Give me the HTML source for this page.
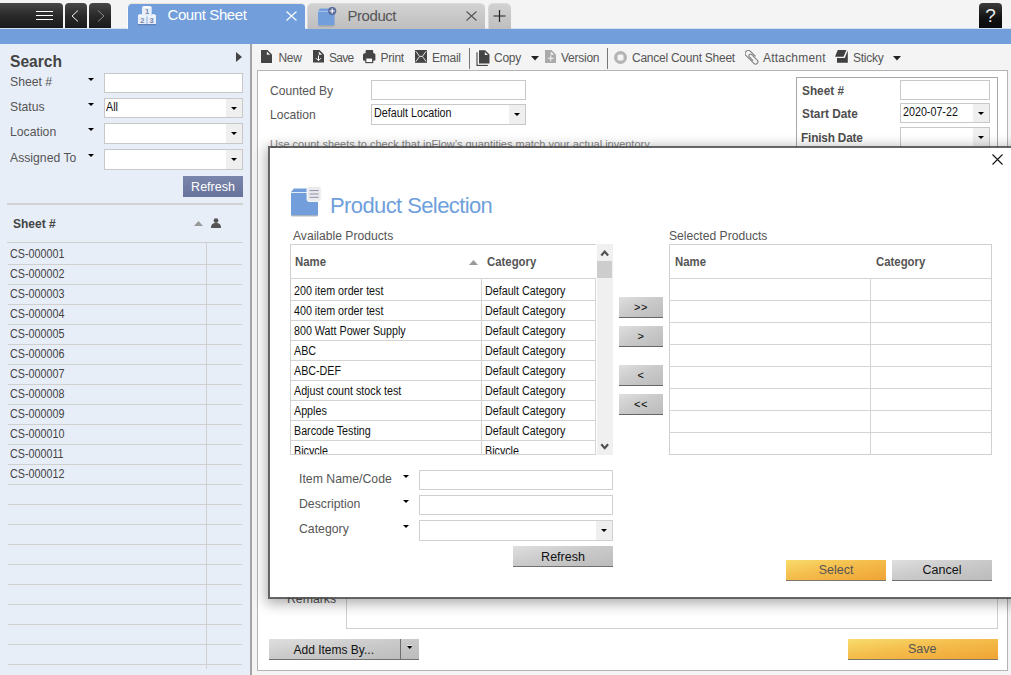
<!DOCTYPE html>
<html>
<head>
<meta charset="utf-8">
<title>Count Sheet</title>
<style>
*{box-sizing:border-box;margin:0;padding:0}
html,body{width:1011px;height:675px;overflow:hidden;background:#f4f4f4;font-family:"Liberation Sans",sans-serif;font-size:12px;color:#444}
.abs{position:absolute}
#topbar{position:absolute;left:0;top:0;width:1011px;height:28px;background:#f4f4f4}
#bluebar{position:absolute;left:0;top:28px;width:1011px;height:16px;background:#729fdb;border-top:1px solid #d3deee}
.dk{position:absolute;top:3px;height:25px;background:linear-gradient(#484848,#2a2a2a 50%,#1a1a1a);border-radius:4px 4px 0 0}
.tab{position:absolute;top:3px;height:25px;border-radius:5px 5px 0 0;font-size:15px;line-height:25px}
#tab1{left:127px;width:177.5px;background:#729fdb;color:#fff;height:26px;border-top:1px solid #ebe6dc;border-left:1px solid #fbfbfb;border-radius:5px 4px 0 0}
#tab2{left:307px;width:178px;height:25.5px;background:linear-gradient(#d2d2d2,#bebebe);color:#555;border-top:1px solid #dcdcdc;border-left:1px solid #d8d8d8}
#tab3{left:488px;width:23px;height:25.5px;background:linear-gradient(#d2d2d2,#bebebe);border-top:1px solid #dcdcdc;border-left:1px solid #d8d8d8}
#left{position:absolute;left:0;top:44px;width:250px;height:631px;background:#e8eef8}
#split{position:absolute;left:250px;top:44px;width:2px;height:631px;background:#a4a4a4}
#main{position:absolute;left:252px;top:44px;width:759px;height:631px;background:#f4f4f4}
.lbl{position:absolute;font-size:12.6px;color:#555;white-space:nowrap;transform:scaleX(.97);transform-origin:0 50%}
.inp{position:absolute;background:#fff;border:1px solid #c8c8c8}
.dd{position:absolute;right:0;top:0;bottom:0;width:16px;background:#efefef}
.dd:after,.car:after{content:"";position:absolute;left:50%;top:50%;margin-left:-3px;margin-top:-1px;border:3px solid transparent;border-top:3px solid #000;border-bottom:none}
.car{position:absolute;width:8px;height:8px}
.dd:after{margin-left:-3px;margin-top:-1.5px}
.val{position:absolute;left:2px;top:2px;font-size:12px;color:#111;letter-spacing:-0.5px;white-space:nowrap}
.row{position:absolute;left:8px;width:234px;height:1px;background:#d0d0d0}
.btn{position:absolute;text-align:center;font-size:12px;color:#111;background:linear-gradient(to bottom right,#dfdfdf,#cbcbcb 45%,#bbbbbb);border-bottom:1px solid #707070;white-space:nowrap}
.tb{position:absolute;top:6px;font-size:12px;letter-spacing:-0.25px;color:#555;white-space:nowrap;line-height:16px}

.nar{display:inline-block;transform:scaleX(.86);transform-origin:0 50%;white-space:nowrap}
.f{position:absolute;font-size:12.6px;color:#555;white-space:nowrap;transform:scaleX(.975);transform-origin:0 50%}
.fb{position:absolute;font-size:11.8px;font-weight:bold;color:#4e4e4e;white-space:nowrap}
.gv{position:absolute;font-size:12.5px;color:#111;white-space:nowrap;transform:scaleX(.858);transform-origin:0 50%}
.gh{font-size:13px;color:#555;transform:scaleX(.875);transform-origin:0 50%}
.gh2{font-size:13.5px;transform:scaleX(.875);transform-origin:0 50%}
.hl{position:absolute;height:1px;background:#d4d4d4}
.vl{position:absolute;width:1px;background:#d4d4d4}
#dlg{position:absolute;left:268px;top:146px;width:760px;height:453px;background:#fff;background-clip:padding-box;border:2px solid rgba(72,72,72,.82);box-shadow:0 3px 12px 2px rgba(0,0,0,.31)}
.yb{position:absolute;text-align:center;font-size:12.5px;color:#555;background:linear-gradient(to bottom right,#f8dc6c,#f4bd4c 45%,#efa434);border-bottom:1px solid #7d766a;white-space:nowrap}
</style>
</head>
<body>
<div id="topbar"></div>
<div id="bluebar"></div>
<div class="dk" style="left:-4px;width:67px"><svg class="abs" style="left:40px;top:8px" width="17" height="10"><path d="M0 0.5H17M0 4.5H17M0 8.5H17" stroke="#fff" stroke-width="1.15"/></svg></div>
<div class="dk" style="left:65px;width:22px"><svg class="abs" style="left:6px;top:7px" width="8" height="12"><path d="M7 0.5L1 6L7 11.5" stroke="#f0f0f0" stroke-width="1" fill="none"/></svg></div>
<div class="dk" style="left:89px;width:22px"><svg class="abs" style="left:8px;top:7px" width="8" height="12"><path d="M1 0.5L7 6L1 11.5" stroke="#8a8a8a" stroke-width="1" fill="none"/></svg></div>
<div class="tab" id="tab1">
<svg class="abs" style="left:9px;top:0px" width="20" height="22" viewBox="0 0 20 22"><path d="M5 3.4L6.4 1.9H13.4L14.7 3.4V11H5Z" fill="#e9eff9"/><path d="M5.6 3.2H14.2" stroke="#fff" stroke-width="1.2"/><path d="M1 11.6L2.2 10.2H5V11.6Z M15 11.6V10.2H17.8L19 11.6Z" fill="#f4f7fc"/><rect x="1" y="11.4" width="8.6" height="9" fill="#e9eff9"/><rect x="10.4" y="11.4" width="8.6" height="9" fill="#e9eff9"/><path d="M1 11.8H19" stroke="#fff" stroke-width="0.9"/><path d="M1 20.7H19" stroke="#4a6ca8" stroke-width="0.9"/><text x="10" y="10.3" font-size="7.5" font-weight="bold" fill="#7486ad" text-anchor="middle" font-family="Liberation Sans, sans-serif">1</text><text x="5.3" y="19.3" font-size="7.5" font-weight="bold" fill="#7486ad" text-anchor="middle" font-family="Liberation Sans, sans-serif">2</text><text x="14.7" y="19.3" font-size="7.5" font-weight="bold" fill="#7486ad" text-anchor="middle" font-family="Liberation Sans, sans-serif">3</text></svg>
<span class="abs" style="left:39.5px;top:-2px;letter-spacing:-0.4px">Count Sheet</span>
<svg class="abs" style="left:158px;top:7px" width="11" height="10"><path d="M0.5 0.5L10.5 9.5M10.5 0.5L0.5 9.5" stroke="#fff" stroke-width="1.1"/></svg></div>
<div class="tab" id="tab2">
<svg class="abs" style="left:9px;top:2.8px" width="20" height="20" viewBox="0 0 20 20"><path d="M1 4.2L3 1.6H15L17.6 4.2V17.5Q17.6 18.5 16.6 18.5H2Q1 18.5 1 17.5Z" fill="#729fdb"/><path d="M1.5 19H17.2" stroke="#9a9a9a" stroke-width="0.8"/><path d="M1 4.5H17" stroke="#b5cdf0" stroke-width="0.8"/><circle cx="15.2" cy="4" r="4.2" fill="#5b6c9c"/><path d="M15.2 1.4V6.6M12.6 4H17.8" stroke="#fff" stroke-width="1.2"/></svg>
<span class="abs" style="left:39.5px;top:-1.5px;letter-spacing:-0.45px">Product</span>
<svg class="abs" style="left:158px;top:7px" width="11" height="10"><path d="M0.5 0.5L10.5 9.5M10.5 0.5L0.5 9.5" stroke="#555" stroke-width="1.1"/></svg></div>
<div class="tab" id="tab3"><svg class="abs" style="left:3.5px;top:5.5px" width="13" height="12"><path d="M6.5 0V12M0.5 6H12.5" stroke="#222" stroke-width="1.2"/></svg></div>
<div class="dk" style="left:979px;width:23px;background:linear-gradient(#3c3c3c,#111 60%,#0c0c0c);color:#ececec;font-size:19px;line-height:25px;text-align:center;top:3px;height:25px">?</div>

<div id="left">
<div class="abs" style="left:10px;top:8.5px;font-size:15.6px;font-weight:bold;color:#444;letter-spacing:0">Search</div>
<svg class="abs" style="left:236px;top:8px" width="6" height="10"><path d="M0 0 L6 5 L0 10Z" fill="#444"/></svg>
<div class="lbl" style="left:10px;top:30.5px">Sheet #</div>
<div class="car" style="left:86.5px;top:31px"></div>
<div class="inp" style="left:104px;top:29px;width:139px;height:20px"></div>
<div class="lbl" style="left:10px;top:55.5px">Status</div>
<div class="car" style="left:86.5px;top:56px"></div>
<div class="inp" style="left:104px;top:54px;width:139px;height:20px"><span class="gv" style="left:1px;top:1px">All</span><div class="dd"></div></div>
<div class="lbl" style="left:10px;top:80.5px">Location</div>
<div class="car" style="left:86.5px;top:81px"></div>
<div class="inp" style="left:104px;top:79px;width:139px;height:21px"><div class="dd"></div></div>
<div class="lbl" style="left:10px;top:106.5px">Assigned To</div>
<div class="car" style="left:86.5px;top:107px"></div>
<div class="inp" style="left:104px;top:105px;width:139px;height:21px"><div class="dd"></div></div>
<div class="abs" style="left:183px;top:132px;width:60px;height:21px;background:linear-gradient(#7a86ab,#67739b);color:#fff;font-size:12.5px;line-height:23px;text-align:center">Refresh</div>
<div class="abs" style="left:7px;top:159px;width:236px;height:2px;background:#d2d2d2"></div>
<div class="abs" style="left:13px;top:173px;font-size:12px;font-weight:bold;color:#444">Sheet #</div>
<svg class="abs" style="left:194px;top:177px" width="9" height="5"><path d="M0 5 L4.5 0 L9 5Z" fill="#999"/></svg>
<svg class="abs" style="left:211px;top:174px" width="10" height="10"><circle cx="5" cy="2.6" r="2.4" fill="#535353"/><path d="M0 10 C0 6 2 5 5 5 C8 5 10 6 10 10Z" fill="#535353"/></svg>
<div class="row" style="top:198px;left:7px;width:236px"></div>
<div class="row" style="top:220px"></div>
<div class="lbl nar" style="left:10px;top:202.5px;color:#444;font-size:12.5px">CS-000001</div>
<div class="row" style="top:240px"></div>
<div class="lbl nar" style="left:10px;top:222.5px;color:#444;font-size:12.5px">CS-000002</div>
<div class="row" style="top:260px"></div>
<div class="lbl nar" style="left:10px;top:242.5px;color:#444;font-size:12.5px">CS-000003</div>
<div class="row" style="top:280px"></div>
<div class="lbl nar" style="left:10px;top:262.5px;color:#444;font-size:12.5px">CS-000004</div>
<div class="row" style="top:300px"></div>
<div class="lbl nar" style="left:10px;top:282.5px;color:#444;font-size:12.5px">CS-000005</div>
<div class="row" style="top:320px"></div>
<div class="lbl nar" style="left:10px;top:302.5px;color:#444;font-size:12.5px">CS-000006</div>
<div class="row" style="top:340px"></div>
<div class="lbl nar" style="left:10px;top:322.5px;color:#444;font-size:12.5px">CS-000007</div>
<div class="row" style="top:360px"></div>
<div class="lbl nar" style="left:10px;top:342.5px;color:#444;font-size:12.5px">CS-000008</div>
<div class="row" style="top:380px"></div>
<div class="lbl nar" style="left:10px;top:362.5px;color:#444;font-size:12.5px">CS-000009</div>
<div class="row" style="top:400px"></div>
<div class="lbl nar" style="left:10px;top:382.5px;color:#444;font-size:12.5px">CS-000010</div>
<div class="row" style="top:420px"></div>
<div class="lbl nar" style="left:10px;top:402.5px;color:#444;font-size:12.5px">CS-000011</div>
<div class="row" style="top:440px"></div>
<div class="lbl nar" style="left:10px;top:422.5px;color:#444;font-size:12.5px">CS-000012</div>
<div class="row" style="top:460px"></div>
<div class="row" style="top:480px"></div>
<div class="row" style="top:500px"></div>
<div class="row" style="top:520px"></div>
<div class="row" style="top:540px"></div>
<div class="row" style="top:560px"></div>
<div class="row" style="top:580px"></div>
<div class="row" style="top:600px"></div>
<div class="row" style="top:620px"></div>
<div class="abs" style="left:206px;top:198px;width:1px;height:427px;background:#d0d0d0"></div>
</div>
<div id="split"></div>
<div id="main">
<svg class="abs" style="left:9px;top:6px" width="11" height="13"><path d="M0 0H6.5L11 4.5V13H0Z" fill="#444"/><path d="M5.8 1.6V4.8H9.2Z" fill="#f4f4f4"/></svg>
<div class="tb" style="left:26.4px">New</div>
<svg class="abs" style="left:61px;top:6.3px" width="11" height="13" viewBox="0 0 11 13"><path d="M0 0H6.5L11 4.5V12.5H0Z" fill="#444"/><path d="M5.8 1.6V4.8H9.2Z" fill="#f4f4f4"/><path d="M5.5 5.5V10.6M3 8.2L5.5 10.7L8 8.2" stroke="#fff" stroke-width="1" fill="none"/></svg>
<div class="tb" style="left:77px;letter-spacing:-0.7px">Save</div>
<svg class="abs" style="left:111px;top:5.8px" width="13" height="14" viewBox="0 0 13 14"><path d="M2.6 4V1Q2.6 0 3.6 0H9.2Q10.2 0 10.2 1V4Z" fill="#444"/><rect x="0" y="3.2" width="12.4" height="7.6" rx="1.5" fill="#444"/><rect x="2.8" y="8" width="6.9" height="4.6" fill="#fafafa" stroke="#444" stroke-width="1.1"/></svg>
<div class="tb" style="left:128.5px">Print</div>
<svg class="abs" style="left:163px;top:6.2px" width="12" height="13" viewBox="0 0 12 13"><rect x="0" y="0" width="12" height="12.8" fill="#444"/><path d="M0.8 1.2L4.6 6.4L0.8 11.6M11.2 1.2L7.4 6.4L11.2 11.6M4.6 6.4H7.4" stroke="#f4f4f4" stroke-width="0.9" fill="none"/></svg>
<div class="tb" style="left:180px">Email</div>
<div class="abs" style="left:217px;top:4px;width:1px;height:21px;background:#777"></div>
<svg class="abs" style="left:223.5px;top:5.5px" width="15" height="17" viewBox="0 0 15 17"><path d="M1 2.2V15.4H11.8" stroke="#444" stroke-width="1.1" fill="none"/><path d="M2 0H9.5L14.2 4.4V14.5H2Z" fill="#f4f4f4"/><path d="M3 0.3H9.2L13.5 4.6V13.6H3Z" fill="#444"/><path d="M8.8 1.9V5H12Z" fill="#f4f4f4"/></svg>
<div class="tb" style="left:242px">Copy</div>
<svg class="abs" style="left:278.5px;top:12px" width="8" height="5"><path d="M0 0H8L4 4.5Z" fill="#222"/></svg>
<svg class="abs" style="left:292.8px;top:6px" width="11" height="13"><path d="M0 0H6.5L11 4.5V13H0Z" fill="#aaa"/><path d="M5.8 1.6V4.8H9.2Z" fill="#f4f4f4"/><path d="M5.8 5.4V11.2M2.9 8.3H8.7" stroke="#f4f4f4" stroke-width="1" fill="none"/></svg>
<div class="tb" style="left:309px">Version</div>
<div class="abs" style="left:355px;top:4px;width:1px;height:21px;background:#777"></div>
<svg class="abs" style="left:362px;top:6.5px" width="13" height="13"><circle cx="6.5" cy="6.5" r="6.5" fill="#b4b4b4"/><rect x="3.5" y="3.5" width="6" height="6" rx="1.5" fill="#f4f4f4"/></svg>
<div class="tb" style="left:380px">Cancel Count Sheet</div>
<svg class="abs" style="left:493px;top:6px" width="15" height="15" viewBox="0 0 15 15"><g transform="translate(3.3,3.5) rotate(-45)"><path d="M3.1 7.2V0A3.1 3.1 0 0 0 -3.1 0V11A2.35 2.35 0 0 0 1.6 11V3.2A1.6 1.6 0 0 0 -1.6 3.2V8.4" stroke="#7a7a7a" stroke-width="1" fill="none"/></g></svg>
<div class="tb" style="left:511px;letter-spacing:0.2px">Attachment</div>
<svg class="abs" style="left:583px;top:6.3px" width="14" height="14" viewBox="0 0 14 14"><path d="M2.8 0.1H11.4L8.6 6.7H0Z" fill="#3f3f3f"/><path d="M12.8 0.6V12.8H2V8.1H9.8Z" fill="#3f3f3f"/></svg>
<div class="tb" style="left:601px">Sticky</div>
<svg class="abs" style="left:641px;top:12px" width="8" height="5"><path d="M0 0H8L4 4.5Z" fill="#222"/></svg>
<div class="abs" id="form" style="left:5px;top:26px;width:751px;height:601px;background:#fff;border:1px solid #b4b4b4"></div>
</div>
<div class="f" style="left:270px;top:84px;font-size:12.4px">Counted By</div>
<div class="inp" style="left:371px;top:80px;width:155px;height:20px"></div>
<div class="f" style="left:270px;top:108px;font-size:12.4px">Location</div>
<div class="inp" style="left:371px;top:104px;width:155px;height:21px"><span class="gv" style="left:2px;top:1px">Default Location</span><div class="dd"></div></div>
<div class="f" style="left:270px;top:138px;font-size:11.25px;color:#858585">Use count sheets to check that inFlow’s quantities match your actual inventory.</div>
<div class="abs" style="left:796px;top:77px;width:202px;height:90px;border:1px solid #a8a8a8"></div>
<div class="fb gh2" style="left:802px;top:82.5px">Sheet #</div>
<div class="inp" style="left:900px;top:80px;width:90px;height:20px"></div>
<div class="fb gh2" style="left:802px;top:105.5px">Start Date</div>
<div class="inp" style="left:900px;top:103px;width:90px;height:20px"><span class="gv" style="left:2px;top:1px">2020-07-22</span><div class="dd"></div></div>
<div class="fb gh2" style="left:801px;top:129.5px;letter-spacing:-0.2px">Finish Date</div>
<div class="inp" style="left:900px;top:127px;width:90px;height:21px"><div class="dd"></div></div>
<div class="f" style="left:287px;top:592px">Remarks</div>
<div class="inp" style="left:346px;top:560px;width:652px;height:69px;border-color:#d0d0d0"></div>
<div class="btn" style="left:269px;top:639px;width:150px;height:21px;line-height:21px;font-size:12px;line-height:23px;text-align:left;padding-left:24.5px">Add Items By...</div><div class="abs" style="left:400px;top:639px;width:1px;height:20px;background:#6e6e6e"></div><svg class="abs" style="left:407px;top:644.6px" width="6" height="5"><path d="M0 0.2H5.4" stroke="#fff" stroke-width="0.8"/><path d="M0 0.9H5.4L2.7 4Z" fill="#000"/></svg>
<div class="yb" style="left:848px;top:639px;width:150px;height:21px;line-height:21px;padding-right:1.5px">Save</div>
<div id="dlg">
<svg class="abs" style="left:721.5px;top:6px" width="11" height="11"><path d="M0.5 0.5L10.5 10.5M10.5 0.5L0.5 10.5" stroke="#111" stroke-width="1.1"/></svg>
<svg class="abs" style="left:20px;top:37px" width="32" height="32" viewBox="0 0 32 32"><path d="M1 7L4 3.5H24L28 7V30.4H1Z" fill="#729fdb"/><path d="M1.5 30.9H27.5" stroke="#9a948c" stroke-width="0.8"/><path d="M1 7.5H28" stroke="#fff" stroke-width="0.8"/><rect x="17" y="1.3" width="14.2" height="15.2" rx="2" fill="#ebebee" stroke="#fff" stroke-width="0.8"/><path d="M19.6 5.6H28.6M19.6 9H28.6M19.6 12.3H28.6" stroke="#8a8fa8" stroke-width="1"/></svg>
<div class="abs" style="left:60px;top:43.5px;font-size:22px;color:#6f9fdc;letter-spacing:-0.6px;white-space:nowrap;line-height:28px">Product Selection</div>
<div class="f" style="left:22.5px;top:80.5px;font-size:12.45px;color:#555">Available Products</div>
<div class="f" style="left:399px;top:80.5px;font-size:12.45px;color:#555">Selected Products</div>
<div class="abs" style="left:20px;top:96px;width:306px;height:211px;border:1px solid #d0d0d0;border-right:none;overflow:hidden" id="g1">
<div class="fb gh" style="left:4px;top:9px">Name</div>
<div class="fb gh" style="left:196px;top:9px">Category</div>
<svg class="abs" style="left:178px;top:15px" width="9" height="5"><path d="M0 5L4.5 0L9 5Z" fill="#999"/></svg>
<div class="hl" style="left:0;top:33px;width:306px"></div>
<div class="gv" style="left:3px;top:39px">200 item order test</div>
<div class="gv" style="left:194px;top:39px">Default Category</div>
<div class="hl" style="left:0;top:55px;width:306px"></div>
<div class="gv" style="left:3px;top:59px">400 item order test</div>
<div class="gv" style="left:194px;top:59px">Default Category</div>
<div class="hl" style="left:0;top:75px;width:306px"></div>
<div class="gv" style="left:3px;top:79px">800 Watt Power Supply</div>
<div class="gv" style="left:194px;top:79px">Default Category</div>
<div class="hl" style="left:0;top:95px;width:306px"></div>
<div class="gv" style="left:3px;top:99px">ABC</div>
<div class="gv" style="left:194px;top:99px">Default Category</div>
<div class="hl" style="left:0;top:115px;width:306px"></div>
<div class="gv" style="left:3px;top:119px">ABC-DEF</div>
<div class="gv" style="left:194px;top:119px">Default Category</div>
<div class="hl" style="left:0;top:135px;width:306px"></div>
<div class="gv" style="left:3px;top:139px">Adjust count stock test</div>
<div class="gv" style="left:194px;top:139px">Default Category</div>
<div class="hl" style="left:0;top:155px;width:306px"></div>
<div class="gv" style="left:3px;top:159px">Apples</div>
<div class="gv" style="left:194px;top:159px">Default Category</div>
<div class="hl" style="left:0;top:175px;width:306px"></div>
<div class="gv" style="left:3px;top:179px">Barcode Testing</div>
<div class="gv" style="left:194px;top:179px">Default Category</div>
<div class="hl" style="left:0;top:195px;width:306px"></div>
<div class="gv" style="left:3px;top:199px">Bicycle</div>
<div class="gv" style="left:194px;top:199px">Bicycle</div>
<div class="hl" style="left:0;top:215px;width:306px"></div>
<div class="vl" style="left:190px;top:34px;height:180px"></div>
<div class="vl" style="left:304px;top:34px;height:180px"></div>
</div>
<div class="abs" style="left:327px;top:96px;width:16px;height:211px;background:#f0f0f0"><div class="abs" style="left:0;top:17px;width:15px;height:17px;background:#cdcdcd"></div><svg class="abs" style="left:3px;top:5px" width="10" height="8"><path d="M1.3 6.5L4.7 2.6L8.1 6.5" stroke="#505050" stroke-width="2.2" fill="none"/></svg><svg class="abs" style="left:3px;top:199px" width="10" height="8"><path d="M1.3 1.2L4.7 5.1L8.1 1.2" stroke="#505050" stroke-width="2.2" fill="none"/></svg></div>
<div class="btn" style="left:349px;top:149px;width:44px;height:21px;line-height:20px;font-size:11px;letter-spacing:0.7px;color:#000;border-bottom-color:#666">&gt;&gt;</div>
<div class="btn" style="left:349px;top:178px;width:44px;height:21px;line-height:20px;font-size:11px;letter-spacing:0.7px;color:#000;border-bottom-color:#666">&gt;</div>
<div class="btn" style="left:349px;top:217px;width:44px;height:21px;line-height:20px;font-size:11px;letter-spacing:0.7px;color:#000;border-bottom-color:#666">&lt;</div>
<div class="btn" style="left:349px;top:246px;width:44px;height:21px;line-height:20px;font-size:11px;letter-spacing:0.7px;color:#000;border-bottom-color:#666">&lt;&lt;</div>
<div class="abs" style="left:399px;top:96px;width:323px;height:211px;border:1px solid #d0d0d0" id="g2">
<div class="fb gh" style="left:5px;top:9px">Name</div>
<div class="fb gh" style="left:206px;top:9px">Category</div>
<div class="hl" style="left:0;top:33px;width:321px"></div>
<div class="hl" style="left:0;top:55px;width:321px"></div>
<div class="hl" style="left:0;top:77px;width:321px"></div>
<div class="hl" style="left:0;top:99px;width:321px"></div>
<div class="hl" style="left:0;top:121px;width:321px"></div>
<div class="hl" style="left:0;top:143px;width:321px"></div>
<div class="hl" style="left:0;top:165px;width:321px"></div>
<div class="hl" style="left:0;top:187px;width:321px"></div>
<div class="vl" style="left:200px;top:34px;height:176px"></div>
</div>
<div class="f" style="left:29px;top:324px">Item Name/Code</div>
<div class="car" style="left:131.5px;top:324px"></div>
<div class="inp" style="left:149px;top:322px;width:194px;height:20px;border-color:#d0d0d0"></div>
<div class="f" style="left:29px;top:349px">Description</div>
<div class="car" style="left:131.5px;top:349px"></div>
<div class="inp" style="left:149px;top:347px;width:194px;height:20px;border-color:#d0d0d0"></div>
<div class="f" style="left:29px;top:374px">Category</div>
<div class="car" style="left:131.5px;top:374px"></div>
<div class="inp" style="left:149px;top:372px;width:194px;height:21px;border-color:#d0d0d0"><div class="dd"></div></div>
<div class="btn" style="left:243px;top:398px;width:100px;height:21px;line-height:22.5px;font-size:12.5px">Refresh</div>
<div class="yb" style="left:516px;top:412px;width:100px;height:21px;line-height:21px">Select</div>
<div class="btn" style="left:622px;top:412px;width:100px;height:21px;line-height:21px;font-size:12.5px">Cancel</div>
</div>
</body>
</html>
